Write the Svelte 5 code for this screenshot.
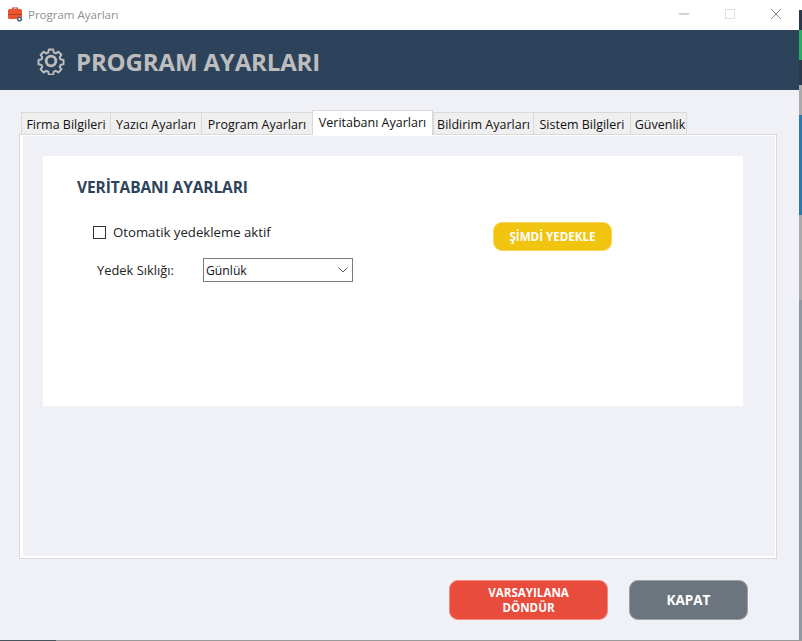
<script>
    const tabs = [
        { name: "Firma Bilgileri", width: 89 },
        { name: "Yazıcı Ayarları", width: 91 },
        { name: "Program Ayarları", width: 111 },
        { name: "Veritabanı Ayarları", width: 121, active: true },
        { name: "Bildirim Ayarları", width: 100 },
        { name: "Sistem Bilgileri", width: 97 },
        { name: "Güvenlik", width: 57 }
    ]
</script>

<div class="screen">
    <div class="window">
        <div class="titlebar">
            <div class="titleLeft">
                <svg width="16" height="16" viewBox="0 0 16 16">
                    <path d="M5.5 3.5V2h5v1.5" fill="none" stroke="#b5462a" stroke-width="1.2"/>
                    <rect x="1" y="3" width="14" height="10" rx="1.5" fill="#e8552e"/>
                    <rect x="1" y="8" width="14" height="1" fill="#b8401f"/>
                    <circle cx="12.5" cy="13" r="2.6" fill="#4d6b85"/>
                    <circle cx="12.5" cy="13" r="1" fill="#fff"/>
                </svg>
                <span>Program Ayarları</span>
            </div>
            <div class="winBtns">
                <svg width="10" height="10" viewBox="0 0 10 10"><path d="M0 5h10" stroke="#a8a8a8"/></svg>
                <svg width="10" height="10" viewBox="0 0 10 10"><rect x=".5" y=".5" width="9" height="9" fill="none" stroke="#e2e2e2"/></svg>
                <svg width="10" height="10" viewBox="0 0 10 10"><path d="M0 0l10 10M10 0L0 10" stroke="#8c8c8c"/></svg>
            </div>
        </div>

        <header class="header">
            <svg width="28" height="28" viewBox="0 0 28 28" fill="none" stroke="#bdbdbd" stroke-width="2.2" stroke-linejoin="round">
                <path d="M11.6 2h4.800l.7 3.300 2.200.9 2.800-1.800 3.400 3.400-1.800 2.800.9 2.200 3.300.7v4.800l-3.300.7-.9 2.200 1.800 2.800-3.400 3.400-2.800-1.800-2.200.9-.7 3.300h-4.800l-.7-3.300-2.200-.9-2.800 1.800-3.400-3.400 1.800-2.800-.9-2.200-3.300-.7v-4.800l3.300-.7.9-2.200-1.800-2.800 3.400-3.400 2.800 1.800 2.200-.9z" transform="translate(1.400 .8) scale(.9)"/>
                <circle cx="14" cy="14" r="4.800" stroke-width="2.800"/>
            </svg>
            <h1>PROGRAM AYARLARI</h1>
        </header>

        <main class="content">
            <div class="tabs">
                {#each tabs as tab}
                    <div class="tab" class:active={tab.active} style="width: {tab.width}px">{tab.name}</div>
                {/each}
            </div>
            <div class="pane">
                <section class="card">
                    <h2>VERİTABANI AYARLARI</h2>
                    <div class="formRow">
                        <div class="fields">
                            <label class="check">
                                <span class="box"></span>
                                Otomatik yedekleme aktif
                            </label>
                            <div class="freq">
                                <span class="freqLabel">Yedek Sıklığı:</span>
                                <div class="select">
                                    <span>Günlük</span>
                                    <svg width="10" height="6" viewBox="0 0 10 6"><path d="M.5.500L5 5 9.500.500" fill="none" stroke="#555"/></svg>
                                </div>
                            </div>
                        </div>
                        <button class="btn backup">ŞİMDİ YEDEKLE</button>
                    </div>
                </section>
            </div>
            <div class="actions">
                <button class="btn reset">VARSAYILANA<br>DÖNDÜR</button>
                <button class="btn close">KAPAT</button>
            </div>
        </main>
    </div>
    <div class="strip"></div>
</div>

<style>
    :global(body) {
        margin: 0;
        overflow: hidden;
        background: #f0f1f6;
    }
    * {
        box-sizing: border-box;
    }
    .screen {
        display: flex;
        width: 802px;
        height: 641px;
        font-family: "Open Sans", "Noto Sans", sans-serif;
        border-bottom: 1px solid;
        border-image: linear-gradient(to right, #47545c 0 57px, #9a9a9a 57px) 1;
    }
    .window {
        width: 799px;
        display: flex;
        flex-direction: column;
        background: #f0f1f6;
    }
    .strip {
        width: 3px;
        background: linear-gradient(to bottom,
            #fff 0 10px, #2a3a4c 10px 30px, #27ae60 30px 60px, #2a3a4c 60px 85px, #aaa 85px 115px,
            #2a7ab0 115px 215px, #aaa 215px 300px, #8f97a0 300px 640px);
    }
    .titlebar {
        height: 30px;
        background: #fff;
        display: flex;
        align-items: center;
        justify-content: space-between;
        padding: 0 18px 2px 7px;
    }
    .titleLeft {
        display: flex;
        align-items: center;
        gap: 5px;
        font-size: 11.500px;
        color: #8f8f8f;
    }
    .winBtns {
        display: flex;
        gap: 36px;
    }
    .header {
        height: 60px;
        background: #2d435b;
        display: flex;
        align-items: center;
        gap: 11px;
        padding: 2px 0 0 37px;
    }
    h1 {
        margin: 0;
        font-size: 24px;
        font-weight: 700;
        color: #bdbdbd;
        letter-spacing: -0.15px;
    }
    .content {
        flex: 1;
        display: flex;
        flex-direction: column;
        padding: 20px 22px 0 19px;
    }
    .tabs {
        display: flex;
        align-items: flex-end;
        height: 25px;
        padding-left: 2px;
        position: relative;
        z-index: 1;
        margin-bottom: -1px;
    }
    .tab {
        height: 23px;
        background: #efefef;
        border: 1px solid #d9d9d9;
        border-right-width: 0;
        font-size: 12.500px;
        line-height: 23px;
        text-align: center;
        color: #111;
        white-space: nowrap;
    }
    .tab:last-child {
        border-right-width: 1px;
        padding-left: 3px;
    }
    .tab.active {
        height: 25px;
        background: #fff;
        border-bottom: none;
        border-right-width: 1px;
        line-height: 24px;
    }
    .pane {
        height: 425px;
        border: 1px solid #d9d9d9;
        box-shadow: inset 3px 0 0 #fff, inset 0 -2px 0 #fff, inset 0 1px 0 #fff, inset -1px 0 0 #fff;
        padding: 21px 33px 0 23px;
    }
    .card {
        height: 250px;
        background: #fff;
        padding: 22px 34px;
    }
    h2 {
        margin: 0 0 25px;
        font-size: 15.500px;
        line-height: 19px;
        font-weight: 700;
        color: #2d435b;
        letter-spacing: -0.1px;
    }
    .formRow {
        display: flex;
        align-items: flex-start;
    }
    .fields {
        width: 416px;
        padding-left: 16px;
    }
    .check {
        display: flex;
        align-items: center;
        gap: 7px;
        height: 20px;
        font-size: 13.200px;
        color: #222;
    }
    .box {
        width: 13px;
        height: 13px;
        border: 1px solid #333;
        background: #fff;
    }
    .freq {
        display: flex;
        align-items: center;
        margin-top: 16px;
        padding-left: 4px;
    }
    .freqLabel {
        width: 106px;
        font-size: 12.900px;
        color: #222;
    }
    .select {
        width: 150px;
        height: 24px;
        border: 1px solid #7a7a7a;
        display: flex;
        align-items: center;
        justify-content: space-between;
        padding: 0 3px 0 2px;
        font-size: 12.200px;
        color: #111;
    }
    .select svg {
        margin-right: 1px;
    }
    .btn {
        font-family: inherit;
        font-weight: 700;
        color: #fff;
        padding: 0;
    }
    .backup {
        width: 119px;
        height: 29px;
        border: 1px solid #f6d75a;
        border-radius: 9px;
        background: #f1c40f;
        font-size: 11.600px;
    }
    .actions {
        display: flex;
        justify-content: flex-end;
        gap: 21px;
        margin-top: 21px;
        padding-right: 29px;
    }
    .reset {
        width: 159px;
        height: 40px;
        border: 1px solid #f08a7e;
        border-radius: 9px;
        background: #e74c3c;
        font-size: 11.600px;
        line-height: 15px;
    }
    .close {
        width: 119px;
        height: 40px;
        border: 1px solid #9aa1a8;
        border-radius: 9px;
        background: #6c757d;
        font-size: 13.500px;
    }
</style>
